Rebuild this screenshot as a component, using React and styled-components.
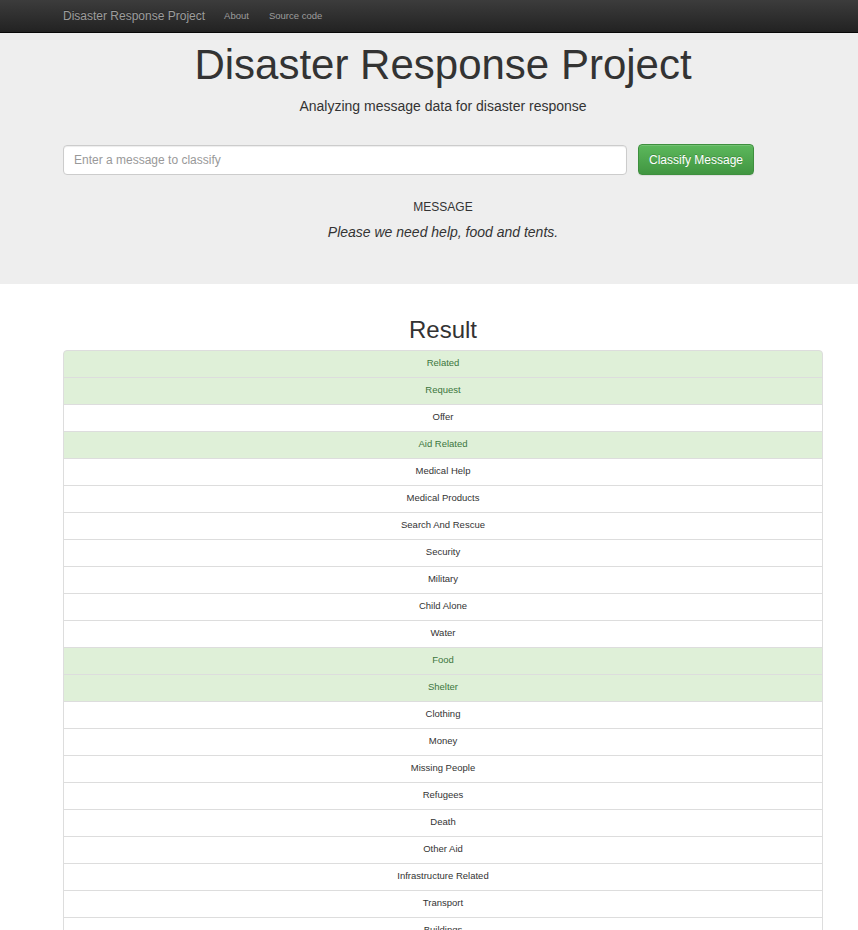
import styled, { createGlobalStyle } from 'styled-components'

const categories = [
    {name: "Related", hit: true},
    {name: "Request", hit: true},
    {name: "Offer"},
    {name: "Aid Related", hit: true},
    {name: "Medical Help"},
    {name: "Medical Products"},
    {name: "Search And Rescue"},
    {name: "Security"},
    {name: "Military"},
    {name: "Child Alone"},
    {name: "Water"},
    {name: "Food", hit: true},
    {name: "Shelter", hit: true},
    {name: "Clothing"},
    {name: "Money"},
    {name: "Missing People"},
    {name: "Refugees"},
    {name: "Death"},
    {name: "Other Aid"},
    {name: "Infrastructure Related"},
    {name: "Transport"},
    {name: "Buildings"},
    {name: "Electricity"},
    {name: "Tools"},
    {name: "Hospitals"},
    {name: "Shops"},
    {name: "Aid Centers"},
    {name: "Other Infrastructure"},
    {name: "Weather Related"},
    {name: "Floods"},
    {name: "Storm"},
    {name: "Fire"},
    {name: "Earthquake"},
    {name: "Cold"},
    {name: "Other Weather"},
    {name: "Direct Report"},
]

const GlobalStyle = createGlobalStyle`
    * {
        box-sizing: border-box;
    }

    body {
        margin: 0;
        background: #fff;
        color: #333;
        font-family: "Liberation Sans", Arial, Helvetica, sans-serif;
        overflow-x: hidden;
    }
`

const Container = styled.div`
    width: 760px;
    margin-left: 63px;
`

const Navbar = styled.nav`
    height: 33px;
    background-image: linear-gradient(to bottom, #3c3c3c 0%, #222 100%);
    border-bottom: 1px solid #080808;
`

const NavInner = styled(Container)`
    display: flex;
    align-items: center;
    height: 31px;
`

const Brand = styled.a`
    font-size: 12px;
    color: #9d9d9d;
    text-decoration: none;
    margin-right: 19px;
    text-shadow: 0 -1px 0 rgba(0, 0, 0, 0.25);
`

const NavLink = styled.a`
    font-size: 9.5px;
    color: #9d9d9d;
    text-decoration: none;
    margin-right: 20px;
`

const Jumbotron = styled.header`
    background: #eee;
    padding: 9px 0 42px;
    text-align: center;
`

const Title = styled.h1`
    margin: 0;
    font-size: 42px;
    font-weight: 400;
    line-height: 46px;
    color: #333;
`

const Subtitle = styled.p`
    margin: 8px 0 0;
    font-size: 14px;
    line-height: 20px;
`

const Form = styled.form`
    display: flex;
    align-items: center;
    gap: 11px;
    margin-top: 28px;
`

const Input = styled.input`
    width: 564px;
    height: 30px;
    padding: 0 10px;
    font-family: inherit;
    font-size: 12px;
    color: #555;
    background: #fff;
    border: 1px solid #ccc;
    border-radius: 4px;
    box-shadow: inset 0 1px 1px rgba(0, 0, 0, 0.075);

    &::placeholder {
        color: #999;
    }
`

const Button = styled.button`
    width: 116px;
    height: 31px;
    padding: 0;
    font-family: inherit;
    font-size: 12px;
    color: #fff;
    background-image: linear-gradient(to bottom, #5cb85c 0%, #419641 100%);
    border: 1px solid #3e8f3e;
    border-radius: 4px;
    text-shadow: 0 -1px 0 rgba(0, 0, 0, 0.2);
    box-shadow: inset 0 1px 0 rgba(255, 255, 255, 0.15), 0 1px 1px rgba(0, 0, 0, 0.075);
`

const Label = styled.p`
    margin: 24px 0 0;
    font-size: 12px;
    line-height: 17px;
`

const Message = styled.p`
    margin: 6px 0 0;
    font-size: 14px;
    line-height: 20px;
    font-style: italic;
`

const ResultTitle = styled.h2`
    margin: 32px 0 6px;
    font-size: 24px;
    font-weight: 400;
    line-height: 28px;
    text-align: center;
`

const List = styled.ul`
    margin: 0;
    padding: 0;
    list-style: none;
`

const Item = styled.li`
    position: relative;
    margin-bottom: -1px;
    padding: 5px 10px 7px;
    font-size: 9.5px;
    line-height: 14px;
    text-align: center;
    color: ${props => props.hit ? '#3c763d' : '#333'};
    background: ${props => props.hit ? '#dff0d8' : '#fff'};
    border: 1px solid #ddd;

    &:first-child {
        border-top-left-radius: 4px;
        border-top-right-radius: 4px;
    }
`

export default function App() {
    return (
        <>
            <GlobalStyle />
            <Navbar>
                <NavInner>
                    <Brand href="#">Disaster Response Project</Brand>
                    <NavLink href="#">About</NavLink>
                    <NavLink href="#">Source code</NavLink>
                </NavInner>
            </Navbar>
            <Jumbotron>
                <Container>
                    <Title>Disaster Response Project</Title>
                    <Subtitle>Analyzing message data for disaster response</Subtitle>
                    <Form onSubmit={e => e.preventDefault()}>
                        <Input placeholder="Enter a message to classify" />
                        <Button type="submit">Classify Message</Button>
                    </Form>
                    <Label>MESSAGE</Label>
                    <Message>Please we need help, food and tents.</Message>
                </Container>
            </Jumbotron>
            <Container>
                <ResultTitle>Result</ResultTitle>
                <List>
                    {categories.map((item, i) =>
                        <Item key={i} hit={item.hit}>{item.name}</Item>
                    )}
                </List>
            </Container>
        </>
    )
}
